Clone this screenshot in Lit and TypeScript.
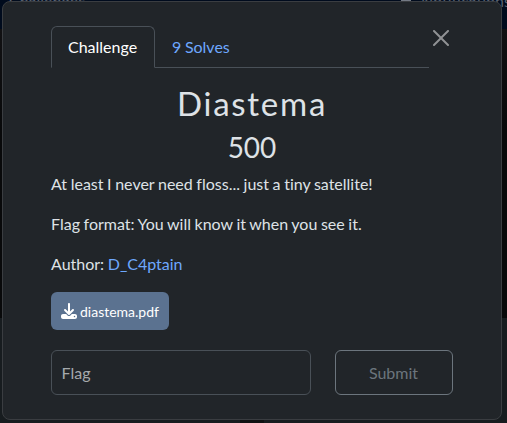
import { LitElement, html, css } from "lit";
import { customElement } from "lit/decorators.js";

@customElement("app-root")
export class AppRoot extends LitElement {
  static styles = css`
    :host {
      display: block;
      position: relative;
      box-sizing: border-box;
      width: 507px;
      height: 423px;
      padding: 1px 5px 3px 2px;
      overflow: hidden;
      background: linear-gradient(#000b1d 0 29px, #111113 29px, #08090a 130px, #08090a 318px, #171c1f 318px);
      color: #dee2e6;
      font: 16px/24px Lato, "Liberation Sans", sans-serif;
      font-variant-ligatures: none;
      word-spacing: -0.5px;
    }
    * { box-sizing: border-box; }
    .behind {
      position: absolute;
      top: -9px;
      line-height: 20px;
      color: #596273;
      white-space: nowrap;
    }
    .challenges { left: 9px; }
    .notifications { left: 421px; }
    .bell {
      position: absolute;
      left: 401px;
      top: 0;
      width: 10px;
      height: 2px;
      background: #747a84;
    }
    .foot {
      position: absolute;
      left: 240px;
      bottom: 0;
      width: 24px;
      height: 4px;
      background: #101213;
    }
    .modal {
      position: relative;
      height: 419px;
      padding: 24px 48px 24px 48px;
      background: #212529;
      border: 1px solid #3a3d41;
      border-radius: 8px;
    }
    .head { display: flex; align-items: flex-start; }
    .tabs {
      display: flex;
      width: 378px;
      height: 42px;
      border-bottom: 1px solid #495057;
    }
    .tab { height: 42px; padding: 9px 17px; color: #6ea8fe; }
    .tab.active {
      width: 104px;
      padding: 8px 16px;
      color: #fff;
      background: #212529;
      border: 1px solid #495057;
      border-bottom-color: #212529;
      border-radius: 6px 6px 0 0;
    }
    .close { display: block; width: 16px; height: 16px; margin: 4px 0 0 4px; fill: #909294; }
    h2, h3 { margin: 0; font-weight: 400; text-align: center; }
    h2 { margin-top: 14px; font-size: 33px; line-height: 42px; letter-spacing: 1.75px; }
    h3 { margin-top: 6px; font-size: 28px; line-height: 35px; }
    p { margin: 0 0 16px; }
    .first { margin-top: 7px; }
    a { color: #6ea8fe; text-decoration: none; }
    .file {
      display: inline-flex;
      align-items: center;
      gap: 3px;
      width: 118px;
      height: 38px;
      padding: 0 10px;
      color: #fff;
      background: #5b7290;
      border-radius: 6px;
      font-size: 14px;
      line-height: 21px;
      white-space: nowrap;
      vertical-align: top;
    }
    .file svg { width: 16px; height: 16px; flex: none; fill: #fff; }
    .form { display: flex; gap: 24px; margin-top: 20px; }
    .flag, .submit { height: 45px; border-radius: 6px; font: inherit; background: transparent; }
    .flag { width: 260px; padding: 0 9.5px; border: 1px solid #495057; color: #dee2e6; outline: 0; }
    .flag::placeholder { color: #a5a9ad; opacity: 1; }
    .submit { width: 118px; padding: 0 1px 0 0; border: 1px solid #6c757d; color: #6c757d; }
  `;

  render() {
    return html`
      <span class="behind challenges">Challenges</span>
      <i class="bell"></i>
      <span class="behind notifications">Notifications</span>
      <i class="foot"></i>
      <section class="modal">
        <div class="head">
          <nav class="tabs">
            <span class="tab active">Challenge</span>
            <span class="tab">9 Solves</span>
          </nav>
          <svg class="close" viewBox="0 0 16 16">
            <path d="M.293.293a1 1 0 0 1 1.414 0L8 6.586 14.293.293a1 1 0 1 1 1.414 1.414L9.414 8l6.293 6.293a1 1 0 0 1-1.414 1.414L8 9.414l-6.293 6.293a1 1 0 0 1-1.414-1.414L6.586 8 .293 1.707a1 1 0 0 1 0-1.414z" />
          </svg>
        </div>
        <h2>Diastema</h2>
        <h3>500</h3>
        <p class="first">At least I never need floss... just a tiny satellite!</p>
        <p>Flag format: You will know it when you see it.</p>
        <p>Author: <a>D_C4ptain</a></p>
        <a class="file">
          <svg viewBox="0 0 512 512">
            <path d="M288 32c0-17.700-14.300-32-32-32s-32 14.300-32 32V274.700l-73.400-73.400c-12.500-12.500-32.800-12.500-45.300 0s-12.500 32.800 0 45.300l128 128c12.500 12.500 32.800 12.500 45.300 0l128-128c12.500-12.500 12.500-32.800 0-45.300s-32.800-12.500-45.300 0L288 274.700V32zM64 352c-35.300 0-64 28.700-64 64v32c0 35.300 28.700 64 64 64H448c35.300 0 64-28.700 64-64V416c0-35.300-28.700-64-64-64H346.500l-45.300 45.300c-25 25-65.500 25-90.500 0L165.500 352H64zm368 56a24 24 0 1 1 0 48 24 24 0 1 1 0-48z" />
          </svg>
          <span>diastema.pdf</span>
        </a>
        <div class="form">
          <input class="flag" placeholder="Flag" />
          <button class="submit">Submit</button>
        </div>
      </section>
    `;
  }
}
